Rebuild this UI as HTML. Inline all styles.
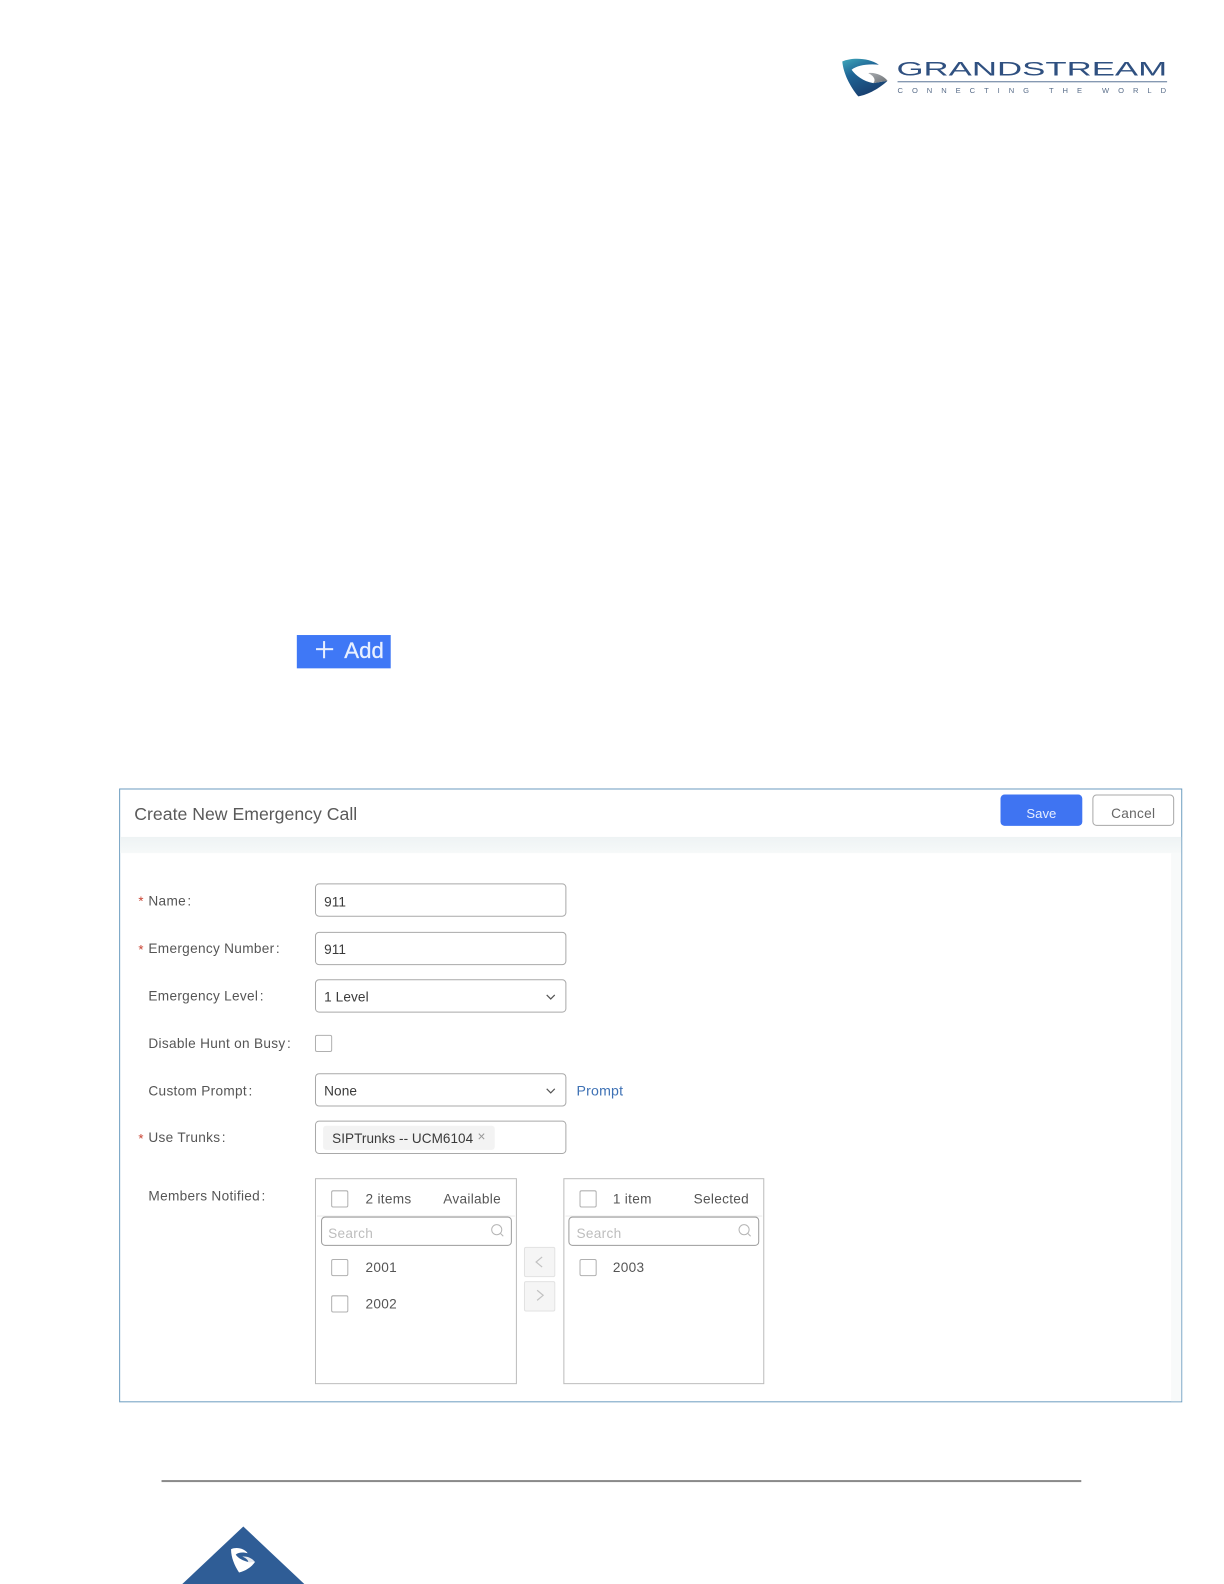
<!DOCTYPE html>
<html><head><meta charset="utf-8"><style>
html,body{margin:0;padding:0;background:#fff}
#o{position:relative;width:1224px;height:1584px;overflow:hidden;background:#fff}
#p{position:absolute;left:0;top:.6px;width:1213px;height:1570px;transform:scale(1.0096);transform-origin:0 0;overflow:hidden;background:#fff;font-family:"Liberation Sans",sans-serif;color:#555}
#p div,#p span.t{position:absolute;box-sizing:border-box;white-space:nowrap}
.t{font-size:13.5px;line-height:20px;height:20px;letter-spacing:.3px;margin-top:.5px}
.l{color:#555}
#p span.v{color:#3a3a3a;letter-spacing:.1px;margin-top:1.5px}
#p span.r{color:#c8402f;font-size:13px}
.i{left:312px;width:249px;height:33px;border:1.5px solid #a9a9a9;border-radius:4px;background:#fff}
.c{width:17px;height:17px;border:1.3px solid #b0b0b0;border-radius:2px;background:#fff}
.b{border:1.5px solid #bcbcbc;background:#fff}
.s{height:29px;width:189px;border:1.3px solid #9c9c9c;border-radius:4px}
.ar{width:31px;height:30px;background:#f5f5f5;border:1px solid #e2e2e2;border-radius:2px}
</style></head><body><div id="o"><div id="p">

<!-- header logo -->
<svg style="position:absolute;left:826.9px;top:49.5px" width="59.4" height="51.4" viewBox="0 0 180 156">
<defs><linearGradient id="g1" x1="0.1" y1="0.05" x2="0.6" y2="1"><stop offset="0" stop-color="#3a9cb4"/><stop offset=".35" stop-color="#1f6596"/><stop offset="1" stop-color="#183c6c"/></linearGradient>
<linearGradient id="g2" x1="0" y1="0" x2="1" y2="1"><stop offset="0" stop-color="#a9adb0"/><stop offset="1" stop-color="#6d7176"/></linearGradient></defs>
<path d="M22 30C50 18 100 18 132 40C100 36 65 42 50 55C62 72 85 90 115 95L158 88C135 110 100 130 70 135C45 105 25 65 22 30Z" fill="url(#g1)"/>
<path d="M100 65C120 62 145 72 158 88L115 95C125 85 115 72 100 65Z" fill="url(#g2)"/>
</svg>
<svg style="position:absolute;left:880px;top:50px" width="290" height="50" viewBox="0 0 290 50">
<text x="8" y="23.8" font-family="Liberation Sans" font-size="19.5" fill="#2f5080" textLength="268" lengthAdjust="spacingAndGlyphs">GRANDSTREAM</text>
<rect x="9" y="29.5" width="267" height="1" fill="#5c7596"/>
<text x="9" y="41" font-family="Liberation Sans" font-size="7.5" fill="#5a6e8a" textLength="266" lengthAdjust="spacing">CONNECTING THE WORLD</text>
</svg>

<!-- Add button -->
<div style="left:294px;top:628px;width:93px;height:33px;background:#3f78f6"></div>
<div style="left:313px;top:641px;width:17px;height:2px;background:#e8f0ff"></div>
<div style="left:320px;top:634px;width:2px;height:17px;background:#e8f0ff"></div>
<span class="t" style="left:341px;top:629px;height:28px;line-height:28px;font-size:22px;letter-spacing:0;color:#e8f0ff;-webkit-text-stroke:.3px #e8f0ff">Add</span>

<!-- Panel -->
<div style="left:118px;top:780px;width:1053px;height:608px;border:1px solid #6d9dc0;background:#fff"></div>
<div style="left:119px;top:828px;width:1051px;height:16px;background:linear-gradient(#eef3f4,#f6f9f9)"></div>
<div style="left:1160px;top:844px;width:10px;height:543px;background:#f8fafa"></div>
<span class="t" style="left:133px;top:792px;height:24px;line-height:24px;font-size:17.5px;letter-spacing:0;color:#5a5a5a">Create New Emergency Call</span>

<div style="left:991px;top:786px;width:81px;height:31px;background:#3f74f2;border-radius:4px"></div>
<span class="t" style="left:991px;top:794px;width:81px;text-align:center;color:#e6eeff;font-size:13px;letter-spacing:0">Save</span>
<div style="left:1082px;top:786px;width:81px;height:31px;border:1.3px solid #a8a8a8;border-radius:4px;background:#fff"></div>
<span class="t" style="left:1082px;top:794px;width:81px;text-align:center;color:#666">Cancel</span>

<!-- Labels -->
<span class="t r" style="left:137px;top:881px">*</span><span class="t l" style="left:147px;top:881px">Name&#8202;:</span>
<span class="t r" style="left:137px;top:929px">*</span><span class="t l" style="left:147px;top:928px">Emergency Number&#8202;:</span>
<span class="t l" style="left:147px;top:975px">Emergency Level&#8202;:</span>
<span class="t l" style="left:147px;top:1022px">Disable Hunt on Busy&#8202;:</span>
<span class="t l" style="left:147px;top:1069px">Custom Prompt&#8202;:</span>
<span class="t r" style="left:137px;top:1116px">*</span><span class="t l" style="left:147px;top:1115px">Use Trunks&#8202;:</span>
<span class="t l" style="left:147px;top:1173px">Members Notified&#8202;:</span>

<!-- Inputs -->
<div class="i" style="top:874px"></div><span class="t v" style="left:321px;top:881px">911</span>
<div class="i" style="top:922px"></div><span class="t v" style="left:321px;top:928px">911</span>
<div class="i" style="top:969px"></div><span class="t v" style="left:321px;top:975px">1 Level</span>
<svg style="position:absolute;left:539px;top:982px" width="13" height="9" viewBox="0 0 13 9"><path d="M2.5 2.5L6.5 6.5L10.5 2.5" fill="none" stroke="#555" stroke-width="1.2"/></svg>
<div class="c" style="left:312px;top:1024px"></div>
<div class="i" style="top:1062px"></div><span class="t v" style="left:321px;top:1068px">None</span>
<svg style="position:absolute;left:539px;top:1075px" width="13" height="9" viewBox="0 0 13 9"><path d="M2.5 2.5L6.5 6.5L10.5 2.5" fill="none" stroke="#555" stroke-width="1.2"/></svg>
<span class="t" style="left:571px;top:1068px;color:#3f72b5;font-size:14px;letter-spacing:.2px">Prompt</span>
<div class="i" style="top:1109px"></div>
<div style="left:320px;top:1114px;width:170px;height:24px;background:#f3f3f3;border-radius:3px"></div>
<span class="t v" style="left:329px;top:1115px;font-size:13.4px;letter-spacing:.05px">SIPTrunks -- UCM6104</span>
<span class="t" style="left:473px;top:1114px;color:#999;letter-spacing:0">×</span>

<!-- Transfer left -->
<div class="b" style="left:312px;top:1166px;width:200px;height:204px"></div>
<div style="left:314px;top:1203px;width:196px;height:1px;background:#ececec"></div>
<div class="c" style="left:328px;top:1178px"></div>
<span class="t l" style="left:362px;top:1176px">2 items</span>
<span class="t l" style="left:439px;top:1176px">Available</span>
<div class="s" style="left:318px;top:1204px"></div>
<span class="t" style="left:325px;top:1210px;color:#bdbdbd">Search</span>
<svg style="position:absolute;left:485px;top:1210px" width="16" height="16" viewBox="0 0 16 16"><circle cx="7" cy="7" r="5" fill="none" stroke="#b5b5b5"/><path d="M10.8 10.8L13.5 13.5" stroke="#b5b5b5"/></svg>
<div class="c" style="left:328px;top:1246px"></div><span class="t l" style="left:362px;top:1244px">2001</span>
<div class="c" style="left:328px;top:1282px"></div><span class="t l" style="left:362px;top:1280px">2002</span>

<!-- arrows -->
<div class="ar" style="left:519px;top:1234px"></div>
<svg style="position:absolute;left:528px;top:1242px" width="12" height="14" viewBox="0 0 12 14"><path d="M9 2L3 7L9 12" fill="none" stroke="#c2c2c2" stroke-width="1.2"/></svg>
<div class="ar" style="left:519px;top:1268px"></div>
<svg style="position:absolute;left:529px;top:1275px" width="12" height="14" viewBox="0 0 12 14"><path d="M3 2L9 7L3 12" fill="none" stroke="#c2c2c2" stroke-width="1.2"/></svg>

<!-- Transfer right -->
<div class="b" style="left:558px;top:1166px;width:199px;height:204px"></div>
<div style="left:560px;top:1203px;width:195px;height:1px;background:#ececec"></div>
<div class="c" style="left:574px;top:1178px"></div>
<span class="t l" style="left:607px;top:1176px">1 item</span>
<span class="t l" style="left:687px;top:1176px">Selected</span>
<div class="s" style="left:563px;top:1204px"></div>
<span class="t" style="left:571px;top:1210px;color:#bdbdbd">Search</span>
<svg style="position:absolute;left:730px;top:1210px" width="16" height="16" viewBox="0 0 16 16"><circle cx="7" cy="7" r="5" fill="none" stroke="#b5b5b5"/><path d="M10.8 10.8L13.5 13.5" stroke="#b5b5b5"/></svg>
<div class="c" style="left:574px;top:1246px"></div><span class="t l" style="left:607px;top:1244px">2003</span>

<!-- Footer -->
<div style="left:160px;top:1465px;width:911px;height:2px;background:#8a8a8a"></div>
<svg style="position:absolute;left:180px;top:1509.5px;overflow:visible" width="122" height="60" viewBox="0 0 122 60">
<path d="M61 1L122 58.5V60H0V58.5Z" fill="#2f5d96"/>
</svg>
<svg style="position:absolute;left:213px;top:1519px" width="49.5" height="48.5" viewBox="0 0 150 147">
<path d="M48 44C65 36 88 42 98 56C85 52 70 53 62 60C70 72 85 78 98 82L120 82C110 98 90 110 72 114C58 92 48 68 48 44Z" fill="#fff"/>
<path d="M82 66C98 64 112 72 120 82L100 84C100 76 92 70 82 66Z" fill="#e4e8ef"/>
</svg>
</div></div></body></html>
